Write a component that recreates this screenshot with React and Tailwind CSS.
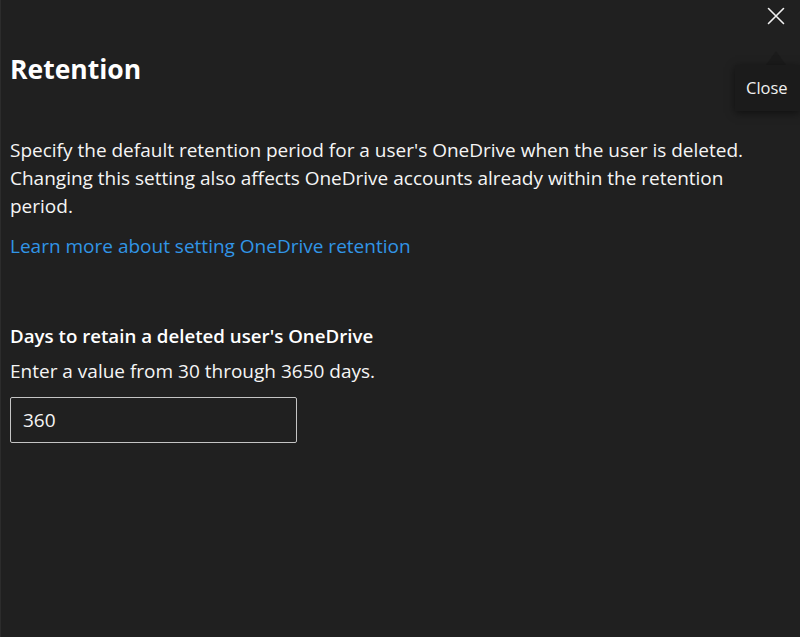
import React from "react";

export default function App() {
  return (
    <div
      className="relative w-[800px] h-[637px] bg-[#202020] border-l border-[#2c2c2c] text-[#f5f5f5] overflow-hidden"
      style={{ fontFamily: '"Open Sans", "Noto Sans", sans-serif' }}
    >
      <button className="absolute right-[14px] top-[6px] w-[20px] h-[20px] flex items-center justify-center">
        <svg width="18" height="18" viewBox="0 0 18 18" fill="none" stroke="#f0f0f0" strokeWidth="1.6" strokeLinecap="round">
          <path d="M1.5 1.5 L16.5 16.5 M16.5 1.5 L1.5 16.5" />
        </svg>
      </button>
      <div className="absolute right-0 top-[51px] w-[65px] flex flex-col">
        <div className="ml-[31px] w-0 h-0 border-l-[10px] border-r-[10px] border-b-[14px] border-l-transparent border-r-transparent border-b-[#1b1b1b]" />
        <div className="h-[46px] bg-[#1b1b1b] shadow-[0_2px_8px_rgba(0,0,0,0.5)] flex items-center pl-[11px] text-[16.5px] text-[#f0f0f0]">
          Close
        </div>
      </div>

      <div className="flex flex-col items-start pl-[9px]">
        <h1 className="pt-[53px] text-[26.5px] leading-[32px] font-bold text-white">Retention</h1>
        <p className="mt-[51px] text-[19px] leading-[28px] w-[748px]">
          Specify the default retention period for a user's OneDrive when the user is deleted.
          Changing this setting also affects OneDrive accounts already within the retention period.
        </p>
        <a className="mt-[12px] text-[19px] leading-[28px] text-[#3195e6]" href="#">
          Learn more about setting OneDrive retention
        </a>
        <div className="mt-[62px] text-[18.7px] leading-[28px] font-semibold text-white">
          Days to retain a deleted user's OneDrive
        </div>
        <div className="mt-[7px] text-[19px] leading-[28px]">Enter a value from 30 through 3650 days.</div>
        <div className="mt-[12px] w-[287px] h-[46px] border border-[#c4c4c4] rounded-[2px] flex items-center px-[12px] text-[19px]">
          360
        </div>
      </div>
    </div>
  );
}
